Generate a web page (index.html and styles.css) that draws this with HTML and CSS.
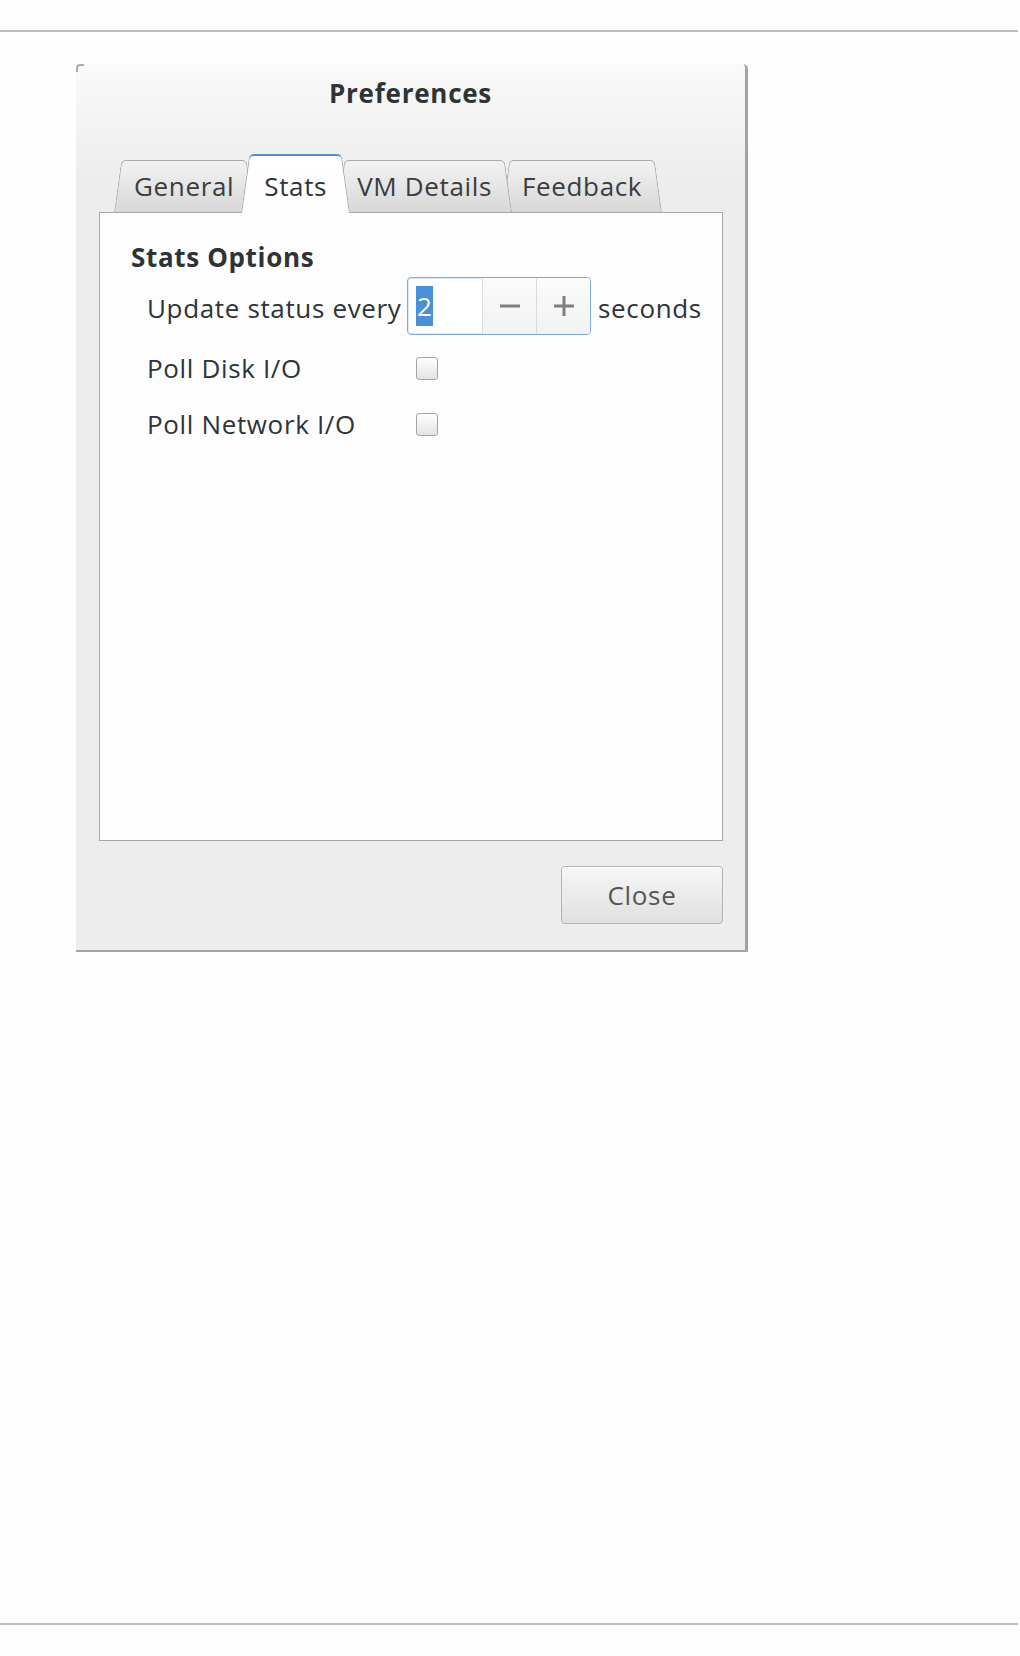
FILE: index.html
```html
<!DOCTYPE html>
<html>
<head>
<meta charset="utf-8">
<title>Preferences</title>
<link rel="stylesheet" href="styles.css">
</head>
<body>
<div class="page">
  <div class="rule"></div>
  <div class="dialog">
    <div class="title">Preferences</div>
    <div class="notebook">
      <div class="tabs">
        <div class="tab t1">General</div>
        <div class="tab active">Stats</div>
        <div class="tab t3">VM Details</div>
        <div class="tab t4">Feedback</div>
      </div>
      <div class="panel">
        <div class="section-title">Stats Options</div>
        <div class="grid">
          <div class="label first">Update status every</div>
          <div class="spinrow">
            <div class="spin">
              <div class="spin-entry"><span class="sel">2</span></div>
              <div class="spin-btn">
                <svg width="20" height="20" viewBox="0 0 20 20"><rect x="0" y="8.5" width="20" height="3" fill="#7f7f7f"/></svg>
              </div>
              <div class="spin-btn">
                <svg width="20" height="20" viewBox="0 0 20 20"><rect x="0" y="8.5" width="20" height="3" fill="#7f7f7f"/><rect x="8.5" y="0" width="3" height="20" fill="#7f7f7f"/></svg>
              </div>
            </div>
            <span class="unit">seconds</span>
          </div>
          <div class="label">Poll Disk I/O</div>
          <div class="check-cell"><span class="check"></span></div>
          <div class="label">Poll Network I/O</div>
          <div class="check-cell"><span class="check"></span></div>
        </div>
      </div>
    </div>
    <div class="actions"><button class="btn">Close</button></div>
  </div>
  <div class="rule bottom"></div>
</div>
</body>
</html>
```
FILE: styles.css
```css
html, body {
  margin: 0;
  padding: 0;
  background: #fefefe;
}
body {
  font-family: "Open Sans", "DejaVu Sans", sans-serif;
  font-size: 26px;
  letter-spacing: 0.65px;
  color: #2e3436;
}
.page {
  padding-top: 30px;
  height: 1656px;
  box-sizing: border-box;
}
.rule {
  height: 2px;
  background: #bcbcbc;
  margin-right: 2px;
}
.rule.bottom {
  margin-top: 671px;
}
.dialog {
  position: relative;
  margin: 32px 0 0 76px;
  width: 669px;
  height: 886px;
  border-right: 3px solid #a3a3a3;
  border-bottom: 2px solid #a3a3a3;
  border-top-right-radius: 5px;
  background: linear-gradient(#fafafa 0, #ededed 110px, #ededed 100%);
  display: flex;
  flex-direction: column;
}
.dialog::before {
  content: "";
  position: absolute;
  left: 0;
  top: 0;
  width: 6px;
  height: 6px;
  border-left: 2px solid #8e8e8e;
  border-top: 2px solid #8e8e8e;
  border-top-left-radius: 4px;
  opacity: 0.7;
}
.title {
  padding-top: 12px;
  height: 35px;
  line-height: 35px;
  text-align: center;
  font-weight: 700;
  letter-spacing: 0.75px;
}
.notebook {
  margin: 43px 22px 0 23px;
}
.tabs {
  position: relative;
  z-index: 2;
  display: flex;
  align-items: flex-end;
  height: 58px;
  padding-left: 15px;
}
.tab {
  position: relative;
  padding: 9px 20px 8px;
  line-height: 35px;
  color: #3a3d3e;
  white-space: nowrap;
  margin-left: -10px;
}
.tab.t1 { margin-left: 0; z-index: 3; }
.tab.active { z-index: 5; }
.tab.t3 { z-index: 2; margin-left: -13px; }
.tab.t4 { z-index: 1; }
.tab::before,
.tab::after {
  content: "";
  position: absolute;
  top: 0;
  bottom: 0;
  width: 60%;
  background: linear-gradient(#f3f3f3, #d7d7d7);
  border-top: 1px solid #a9a9a9;
  z-index: -1;
}
.tab::before {
  left: 0;
  border-left: 1px solid #a9a9a9;
  border-top-left-radius: 5px;
  transform: skewX(-8deg);
  transform-origin: bottom left;
}
.tab::after {
  right: 0;
  border-right: 1px solid #a9a9a9;
  border-top-right-radius: 5px;
  transform: skewX(8deg);
  transform-origin: bottom right;
}
.tab.active {
  padding: 15px 23px 9px;
  margin-left: -13px;
  margin-bottom: -1px;
  color: #2e3436;
}
.tab.active::before,
.tab.active::after {
  background: linear-gradient(#ffffff, #fdfdfd);
  border-top: 2px solid #4a90d9;
}
.panel {
  box-sizing: border-box;
  height: 629px;
  border: 1px solid #a7a7a7;
  background: #fdfdfd;
  padding: 27px 0 0 31px;
}
.section-title {
  font-weight: 700;
  line-height: 35px;
}
.grid {
  display: grid;
  grid-template-columns: 260px auto;
  grid-template-rows: 58px 45px 45px;
  row-gap: 11px;
  margin: 2px 0 0 16px;
  align-items: center;
}
.label {
  line-height: 35px;
  white-space: nowrap;
}
.label.first {
  margin-top: 4px;
}
.spinrow {
  display: flex;
  align-items: center;
  gap: 7px;
}
.unit {
  line-height: 35px;
  margin-top: 4px;
}
.spin {
  display: flex;
  box-sizing: border-box;
  width: 184px;
  height: 58px;
  border: 1px solid #80aadc;
  border-radius: 4px;
  background: #fff;
  overflow: hidden;
  box-shadow: inset 0 0 0 1px rgba(74, 144, 217, 0.2);
}
.spin-entry {
  box-sizing: border-box;
  width: 74px;
  padding-left: 8px;
  display: flex;
  align-items: center;
}
.sel {
  background: #4a90d9;
  color: #fff;
  line-height: 40px;
  padding: 0 1px;
  letter-spacing: 0;
}
.spin-btn {
  box-sizing: border-box;
  width: 54px;
  border-left: 1px solid #dadada;
  display: flex;
  align-items: center;
  justify-content: center;
  background: linear-gradient(#fbfbfb, #f2f2f2);
}
.check-cell {
  display: flex;
  align-items: center;
  padding-left: 9px;
}
.check {
  display: block;
  box-sizing: border-box;
  width: 22px;
  height: 23px;
  border: 1px solid #a2a99c;
  border-radius: 3px;
  background: linear-gradient(#ffffff, #e3e3e3);
}
.actions {
  display: flex;
  justify-content: flex-end;
  padding: 25px 22px 0 0;
}
.btn {
  box-sizing: border-box;
  width: 162px;
  height: 58px;
  font: inherit;
  letter-spacing: 0.65px;
  line-height: 35px;
  color: #555753;
  border: 1px solid #b3b3b3;
  border-radius: 4px;
  background: linear-gradient(#f6f6f6, #e0e0e0);
  box-shadow: inset 0 1px #ffffff;
  padding: 0;
}
```
